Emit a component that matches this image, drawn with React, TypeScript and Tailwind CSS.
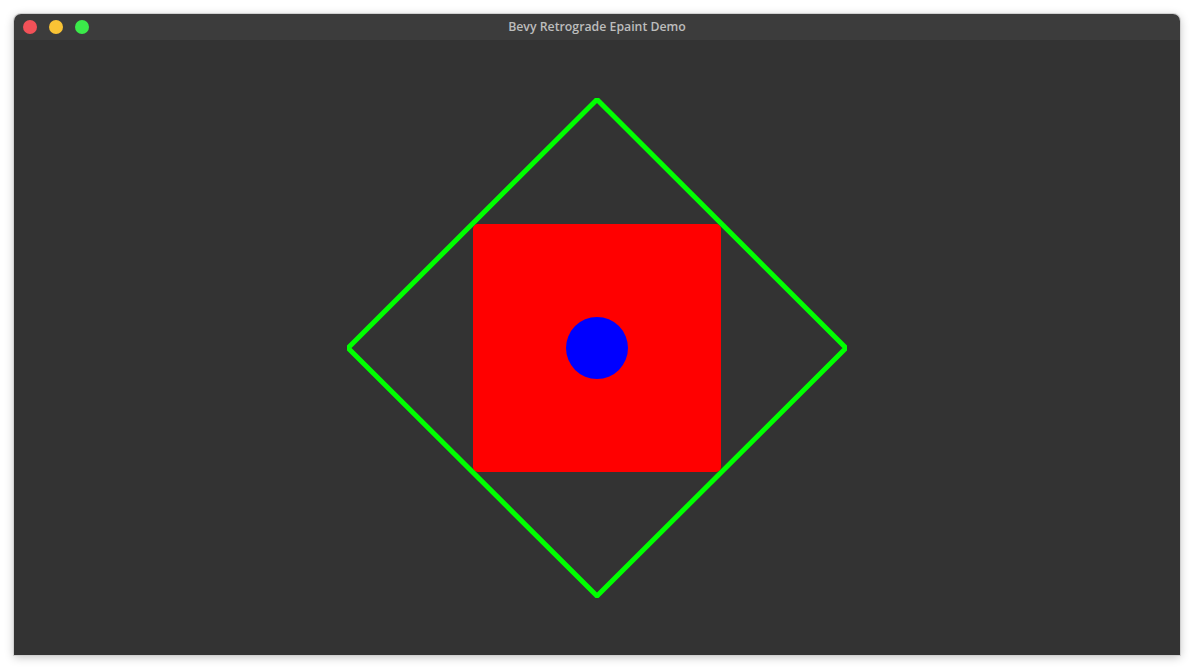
import React from 'react';

const TrafficLights: React.FC = () => (
  <div className="absolute left-[9px] top-1/2 -translate-y-1/2 flex items-center gap-[12px]">
    <span className="block size-[14px] rounded-full bg-[#f25158]" />
    <span className="block size-[14px] rounded-full bg-[#f9c335]" />
    <span className="block size-[14px] rounded-full bg-[#3bea4a]" />
  </div>
);

// the epaint scene: diamond outline, red quad, blue dot
const Scene: React.FC = () => (
  <svg width="500" height="500" viewBox="0 0 500 500" className="block">
    <rect x="126" y="126" width="248" height="248" rx="5" fill="#ff0000" />
    <circle cx="250" cy="250" r="31" fill="#0000ff" />
    <polygon
      points="250,1.5 499,250 250,498 1,250"
      fill="none"
      stroke="#00ff00"
      strokeWidth="5"
      strokeLinejoin="round"
    />
  </svg>
);

export default function App() {
  return (
    <div className="w-[1194px] h-[669px] bg-white p-[14px]">
      <div className="flex h-full w-full flex-col overflow-hidden rounded-t-[7px] shadow-[0_2px_10px_rgba(0,0,0,0.25)] ring-1 ring-[#d0d0d0]">
        <div className="relative flex h-[26px] shrink-0 items-center justify-center bg-[#3c3c3c]">
          <TrafficLights />
          <span className="font-['Open_Sans',sans-serif] text-[12.3px] font-semibold text-[#bdbdbd] leading-none">
            Bevy Retrograde Epaint Demo
          </span>
        </div>
        <div className="flex flex-1 items-center justify-center bg-[#333333]">
          <Scene />
        </div>
      </div>
    </div>
  );
}
